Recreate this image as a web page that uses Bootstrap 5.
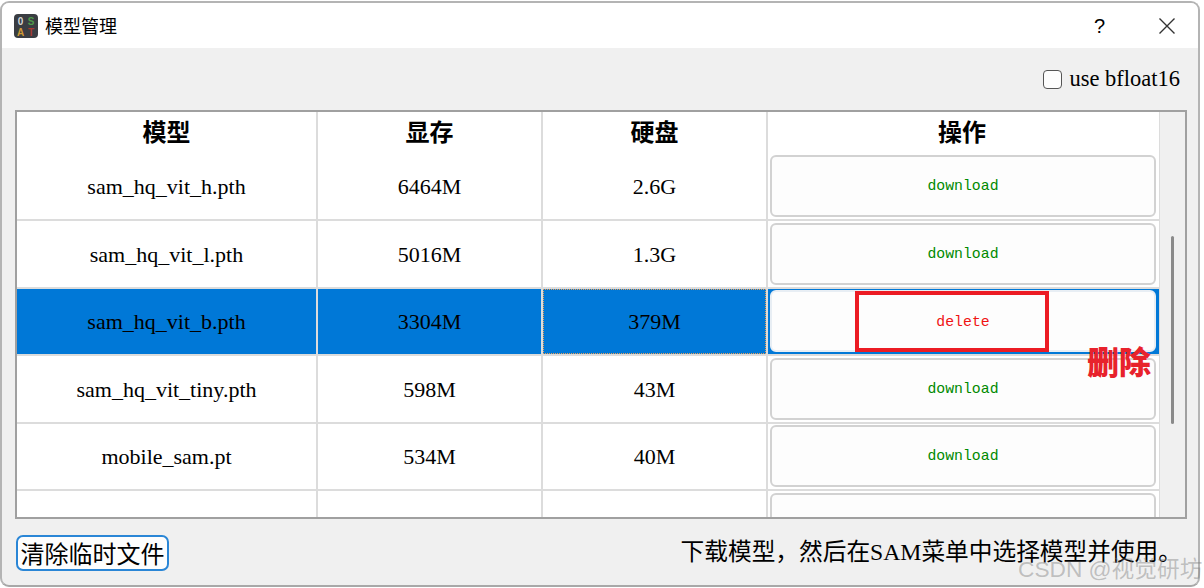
<!DOCTYPE html>
<html lang="zh-CN">
<head>
    <meta charset="UTF-8">
    <meta name="viewport" content="width=device-width, initial-scale=1.0">
    <title>模型管理</title>
    <link href="https://cdn.jsdelivr.net/npm/bootstrap@5.3.0/dist/css/bootstrap.min.css" rel="stylesheet">
    <style>
        html, body { height: 100%; }
        body { background: #fff; overflow: hidden; font-family: "Liberation Serif", "Noto Sans CJK SC", serif; color: #000; }
        .win { width: 1200px; height: 586px; margin-top: 1px; border: 2px solid #b4b4b4; border-bottom-color: #a8a8a8; border-radius: 9px; background: #f0f0f0; overflow: hidden; position: relative; }
        .win-title { height: 45px; background: #fff; padding-left: 12px; font-family: "Noto Sans CJK SC", sans-serif; font-size: 18px; }
        .win-icon { width: 24px; height: 24px; margin-right: 7px; }
        .win-ctl { width: 62px; height: 45px; }
        .win-help { font-family: "Liberation Sans", sans-serif; font-size: 20px; width: 35px; text-align: center; margin-right: 19px; }
        .tool-row { height: 62px; padding: 0 18px 0 0; font-size: 22.5px; }
        .tool-check { width: 19px; height: 19px; border: 1.5px solid #555; border-radius: 4px; background: #fdfdfd; margin-right: 7px; margin-top: 1px; }
        .grid-box { height: 409px; margin-left: 13px; width: 1172px; border: 2px solid #a0a0a0; background: #fff; overflow: hidden; }
        .grid-main { width: 1142px; overflow: hidden; }
        .model-grid { width: 1142px; table-layout: fixed; border-collapse: collapse; margin: 0; }
        .model-grid th, .model-grid td { padding: 0; text-align: center; vertical-align: middle; border-right: 2px solid #dcdcdc; font-size: 22px; background: #fff; color: #000; }
        .model-grid th { height: 41px; font-family: "Noto Sans CJK SC", sans-serif; font-weight: 700; font-size: 24px; line-height: 1; padding-bottom: 4px; }
        .model-grid th:last-child { padding-right: 3px; }
        .model-grid td { height: 67.4px; border-bottom: 2px solid #dcdcdc; padding-top: 1px; }
        .model-grid td:last-child { padding-top: 0; }
        .model-grid th:last-child, .model-grid td:last-child { border-right: 0; }
        .model-grid tr.picked td { background: #0078d7; }
        .model-grid tr.picked td.cur-cell { outline: 1px dotted #e8a05a; outline-offset: -2px; }
        .model-grid tr.cut-row td { padding-top: 8px; }
        .model-grid tr.cut-row td:last-child { padding-top: 0; }
        .act-btn { display: flex; align-items: center; justify-content: center; width: 386px; height: 62px; margin: 0 0 0 2px; padding: 1px 0 0; border: 2px solid #d2d2d2; border-radius: 6px; background: #fdfdfd; font-family: "Liberation Mono", monospace; font-size: 14.8px; line-height: 1; color: #008a00; }
        .act-btn.act-del { color: #f01414; border-color: #e8eef4; height: 62px; }
        .scroll-col { width: 26px; background: #f0f0f0; border-left: 1px solid #dcdcdc; }
        .scroll-thumb { width: 3px; height: 188px; margin: 124px 0 0 11px; background: #8a8a8a; border-radius: 2px; }
        .foot-row { height: 68px; padding: 0 16px 0 14px; }
        .clear-btn { height: 36px; width: 153px; padding: 0; border: 2px solid #2a86d6; border-radius: 7px; background: #fdfdfd; font-family: "Noto Sans CJK SC", sans-serif; font-size: 24px; line-height: 1; color: #000; }
        .foot-hint { font-size: 23.7px; font-family: "Liberation Serif", "Noto Sans CJK SC", serif; }
        .note-box { position: absolute; left: 853px; top: 288px; width: 194px; height: 61px; border: 4px solid #ec1c24; }
        .note-text { position: absolute; left: 1085px; top: 338px; font-family: "Noto Sans CJK SC", sans-serif; font-weight: 900; font-size: 32px; line-height: 1.2; color: #e8222c; }
        .mark-text { position: absolute; left: 1018px; top: 555px; font-family: "Liberation Sans", "Noto Sans CJK SC", sans-serif; font-size: 22.7px; line-height: 1.3; color: rgba(120, 120, 120, .42); white-space: nowrap; }
    </style>
</head>
<body>
    <div class="win">
        <div class="win-title d-flex align-items-center">
            <svg class="win-icon" viewBox="0 0 24 24">
                <rect width="24" height="24" rx="4" fill="#3a3d42"/>
                <text x="6.5" y="11" font-family="Liberation Sans" font-size="10" font-weight="700" text-anchor="middle" fill="#d8d8d8">0</text>
                <text x="17" y="11" font-family="Liberation Sans" font-size="10" font-weight="700" text-anchor="middle" fill="#4f9a4a">S</text>
                <text x="6.5" y="22" font-family="Liberation Sans" font-size="10" font-weight="700" text-anchor="middle" fill="#d09a35">A</text>
                <text x="17" y="22" font-family="Liberation Sans" font-size="10" font-weight="700" text-anchor="middle" fill="#a83a32">T</text>
            </svg>
            <span>模型管理</span>
            <span class="ms-auto win-help">?</span>
            <span class="win-ctl d-flex align-items-center justify-content-center">
                <svg width="18" height="18" viewBox="0 0 18 18"><path d="M1.5 1.5 16.5 16.5M16.5 1.5 1.5 16.5" stroke="#333" stroke-width="1.4" fill="none"/></svg>
            </span>
        </div>

        <div class="tool-row d-flex align-items-center justify-content-end">
            <span class="tool-check"></span>
            <span>use bfloat16</span>
        </div>

        <div class="grid-box d-flex">
            <div class="grid-main">
                <table class="model-grid">
                    <colgroup>
                        <col style="width: 300px">
                        <col style="width: 225px">
                        <col style="width: 225px">
                        <col>
                    </colgroup>
                    <thead>
                        <tr><th>模型</th><th>显存</th><th>硬盘</th><th>操作</th></tr>
                    </thead>
                    <tbody id="modelBody"></tbody>
                </table>
            </div>
            <div class="scroll-col">
                <div class="scroll-thumb"></div>
            </div>
        </div>

        <div class="foot-row d-flex align-items-center justify-content-between">
            <button type="button" class="clear-btn">清除临时文件</button>
            <span class="foot-hint">下载模型，然后在SAM菜单中选择模型并使用。</span>
        </div>

        <div class="note-box"></div>
        <div class="note-text">删除</div>
    </div>
    <div class="mark-text">CSDN @视觉研坊</div>

    <script>
        const models = [
            ['sam_hq_vit_h.pth', '6464M', '2.6G', 'download'],
            ['sam_hq_vit_l.pth', '5016M', '1.3G', 'download'],
            ['sam_hq_vit_b.pth', '3304M', '379M', 'delete'],
            ['sam_hq_vit_tiny.pth', '598M', '43M', 'download'],
            ['mobile_sam.pt', '534M', '40M', 'download'],
            ['edge_sam_3x.pth', '2448M', '38.8M', 'download']
        ];

        document.getElementById('modelBody').innerHTML = models.map((m, i) => `
            <tr class="${m[3] === 'delete' ? 'picked' : ''} ${i === models.length - 1 ? 'cut-row' : ''}">
                <td>${m[0]}</td>
                <td>${m[1]}</td>
                <td class="${m[3] === 'delete' ? 'cur-cell' : ''}">${m[2]}</td>
                <td><div class="act-btn ${m[3] === 'delete' ? 'act-del' : ''}">${m[3]}</div></td>
            </tr>
        `).join('');
    </script>
    <script src="https://cdn.jsdelivr.net/npm/bootstrap@5.3.0/dist/js/bootstrap.bundle.min.js"></script>
</body>
</html>
